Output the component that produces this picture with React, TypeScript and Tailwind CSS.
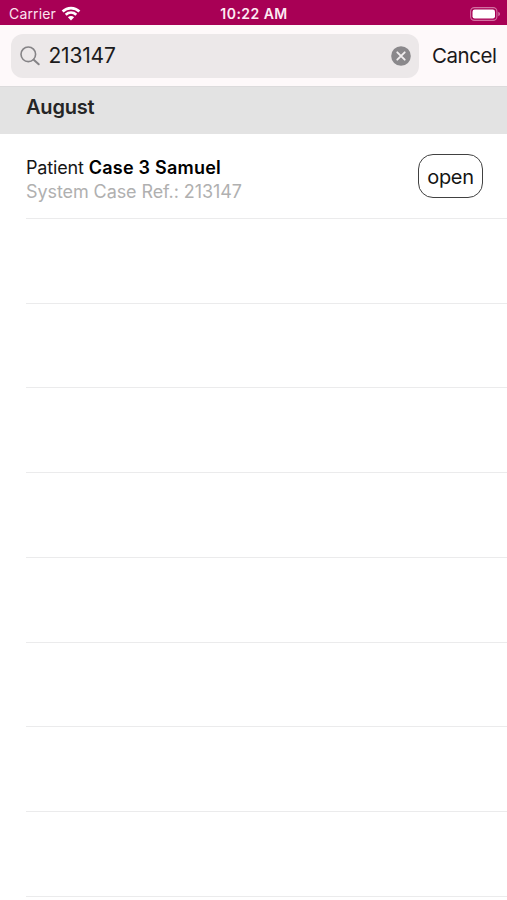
import React from 'react'

interface CaseItem {
  name: string
  reference: string
}

const cases: CaseItem[] = [{ name: 'Case 3 Samuel', reference: '213147' }]
const EMPTY_ROWS = 8

const WifiIcon = () => (
  <svg width="20" height="15" viewBox="0 0 20 15" fill="none" stroke="#fff" strokeWidth="2.7">
    <path d="M1.6 5.5C6.4 0.9 13.6 0.9 18.4 5.5" />
    <path d="M4.7 8.8C7.8 6 12.2 6 15.3 8.8" />
    <path d="M10 14.4L6.9 11.2C8.7 9.6 11.3 9.6 13.1 11.2Z" fill="#fff" stroke="none" />
  </svg>
)

const BatteryIcon = () => (
  <svg width="31" height="14" viewBox="0 0 31 14" fill="none">
    <rect x="0.6" y="0.6" width="26.3" height="12.8" rx="3.8" stroke="#d272a2" strokeWidth="1.1" />
    <rect x="2.5" y="2.5" width="22.5" height="9" rx="2.2" fill="#fff" />
    <path d="M28.4 4.8C30.4 5.6 30.4 8.4 28.4 9.2Z" fill="#d98bb2" />
  </svg>
)

const SearchIcon = () => (
  <svg width="20" height="20" viewBox="0 0 20 20" fill="none" stroke="#858386" strokeWidth="1.6" strokeLinecap="round">
    <circle cx="8.3" cy="8.3" r="7.3" />
    <path d="M13.7 13.7L18.7 18.3" strokeWidth="2" />
  </svg>
)

const ClearIcon = () => (
  <svg width="20" height="20" viewBox="0 0 20 20">
    <circle cx="10" cy="10" r="9.8" fill="#8a888b" />
    <path d="M6.3 6.3L13.7 13.7M13.7 6.3L6.3 13.7" stroke="#f1eeef" strokeWidth="1.9" strokeLinecap="round" />
  </svg>
)

const StatusBar: React.FC = () => (
  <div className="grid h-[25px] grid-cols-3 items-center bg-[#a80055] pt-0.5 pr-[6px] pl-[9px] text-white">
    <div className="flex items-center gap-[5px]">
      <span className="text-[14px] leading-none tracking-[0.15px] text-[#fbe3ef]">Carrier</span>
      <WifiIcon />
    </div>
    <span className="pr-[2px] text-center text-[14px] leading-none font-semibold tracking-[0.45px] text-[#fdeaf3]">
      10:22 AM
    </span>
    <div className="flex justify-end">
      <BatteryIcon />
    </div>
  </div>
)

const SearchBar: React.FC = () => (
  <div className="flex h-[61px] items-center bg-[#fef9fa] pl-[11px]">
    <div className="flex h-[44px] w-[408px] shrink-0 items-center rounded-[12px] bg-[#ece8e9] pr-2 pl-[9px]">
      <SearchIcon />
      <span className="ml-[8.5px] flex-1 text-[21px] leading-7 tracking-[-0.2px] text-[#1c1b1c]">213147</span>
      <ClearIcon />
    </div>
    <button className="ml-[13px] text-[20.5px] leading-7 tracking-[-0.45px] text-[#1a1819]">Cancel</button>
  </div>
)

const CaseRow: React.FC<{ item?: CaseItem }> = ({ item }) => (
  <li className="ml-[26px] flex h-[84.7px] shrink-0 items-center justify-between border-b border-[#ebebec] pr-6">
    {item && (
      <>
        <div className="pt-[7px] text-[18px] leading-6">
          <p className="tracking-[-0.15px] text-[#161616]">
            Patient <b className="font-semibold tracking-[0.23px] text-black">{item.name}</b>
          </p>
          <p className="tracking-[-0.09px] text-[#b0b0b0]">System Case Ref.: {item.reference}</p>
        </div>
        <button className="h-[44px] w-[65px] rounded-[15px] border-[1.5px] border-[#414141] pt-0.5 text-[20px] leading-none tracking-[-0.3px] text-[#151515]">
          open
        </button>
      </>
    )}
  </li>
)

const App: React.FC = () => (
  <div className="flex h-screen flex-col overflow-hidden bg-white font-['Inter','Liberation_Sans',sans-serif]">
    <StatusBar />
    <SearchBar />
    <h2 className="h-[48px] shrink-0 border-t border-[#dcdbdc] bg-[#e3e3e3] pt-[6px] pl-[26px] text-[20px] leading-7 font-semibold tracking-[-0.2px] text-[#252525]">
      August
    </h2>
    <ul className="flex flex-col pt-[0.4px]">
      {cases.map((item) => (
        <CaseRow key={item.reference} item={item} />
      ))}
      {Array.from({ length: EMPTY_ROWS }, (_, i) => (
        <CaseRow key={i} />
      ))}
    </ul>
  </div>
)

export default App
